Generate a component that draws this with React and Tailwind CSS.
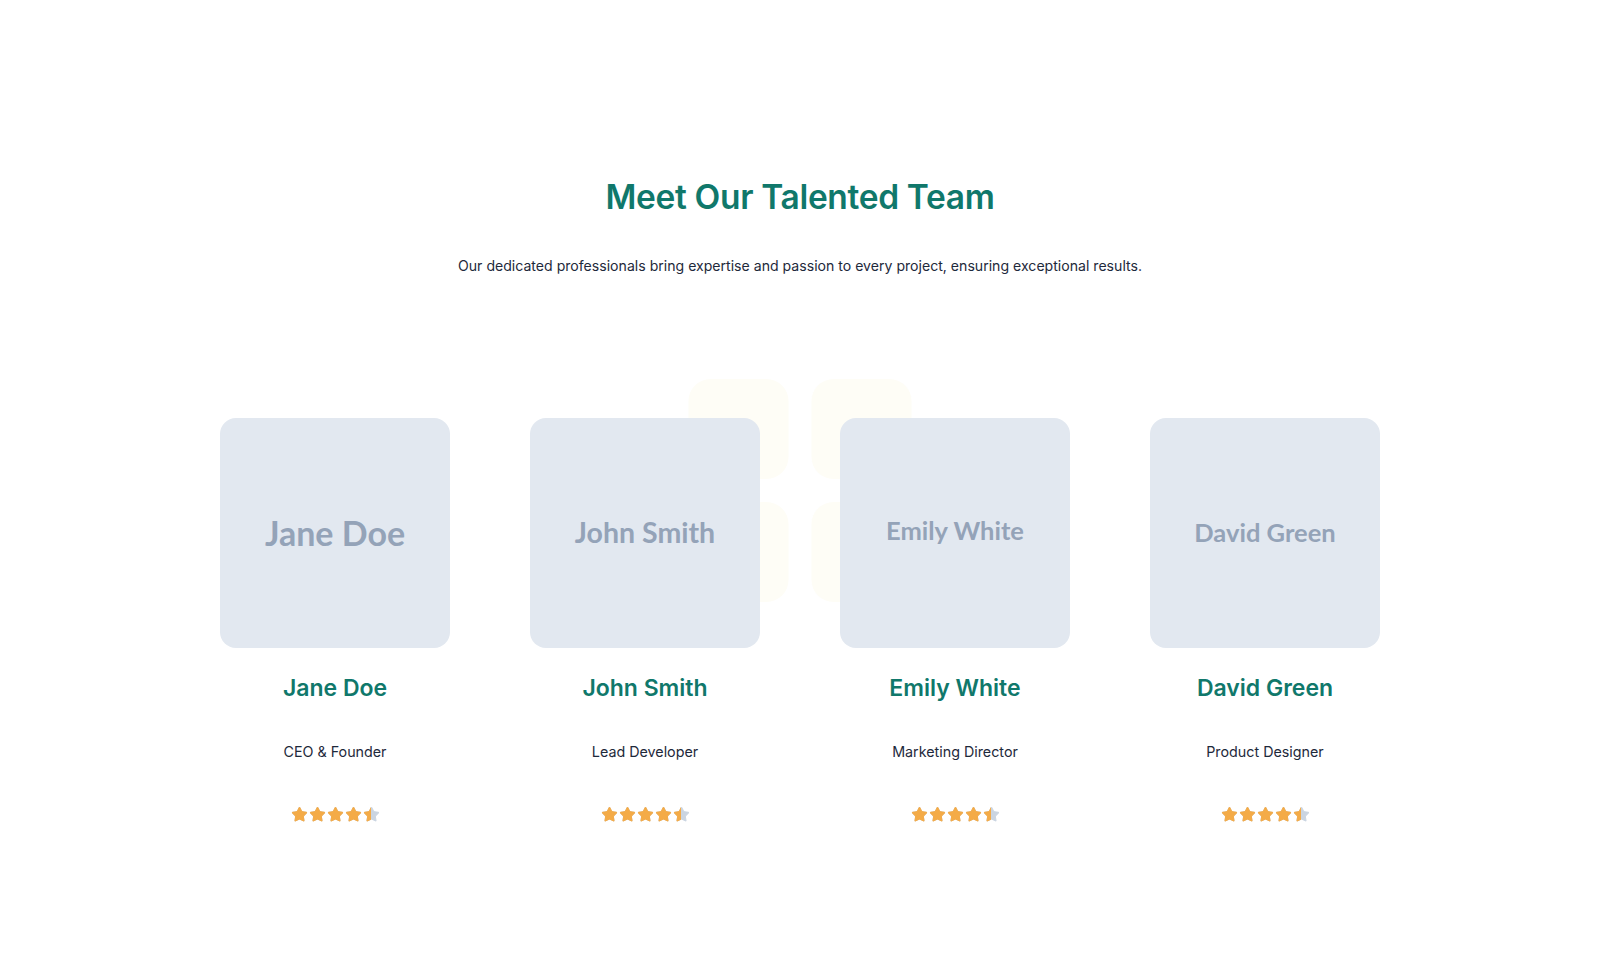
import { Star } from "lucide-react";

const team = [
    { name: "Jane Doe", role: "CEO & Founder", size: "text-[34px] -translate-y-[1px]", rating: 4.5 },
    { name: "John Smith", role: "Lead Developer", size: "text-[28.5px] -translate-y-[1px]", rating: 4.5 },
    { name: "Emily White", role: "Marketing Director", size: "text-[25.5px] -translate-y-[3px]", rating: 4.5 },
    { name: "David Green", role: "Product Designer", size: "text-[25.5px] -translate-y-[1px]", rating: 4.5 },
];

function Stars({ rating }) {
    return (
        <div className="flex items-center justify-center gap-[1px]">
            {[0, 1, 2, 3, 4].map((i) => {
                const fill = Math.max(0, Math.min(1, rating - i));
                return (
                    <div key={i} className="relative h-[17px] w-[17px]">
                        <Star className="absolute inset-0 h-[17px] w-[17px] fill-[#cbd5e1] text-[#cbd5e1]" strokeWidth={1.5} />
                        <div className="absolute inset-y-0 left-0 overflow-hidden" style={{ width: `${fill * 100}%` }}>
                            <Star className="h-[17px] w-[17px] fill-[#f4ab47] text-[#f4ab47]" strokeWidth={1.5} />
                        </div>
                    </div>
                );
            })}
        </div>
    );
}

function MemberCard({ member }) {
    return (
        <div className="flex w-[230px] flex-col items-center">
            <div className="flex h-[230px] w-[230px] items-center justify-center rounded-2xl bg-[#e2e8f0]">
                <span className={`font-['Lato',sans-serif] font-bold text-[#94a3b8] ${member.size}`}>{member.name}</span>
            </div>
            <h3 className="mt-[25px] text-[23px] font-semibold leading-[30px] text-[#10786b]">{member.name}</h3>
            <p className="mt-[39px] text-[14.3px] leading-[20px] text-[#1e293b]">{member.role}</p>
            <div className="mt-[44px]">
                <Stars rating={member.rating} />
            </div>
        </div>
    );
}

export default function App() {
    return (
        <main className="min-h-screen bg-white font-['Inter',sans-serif]">
            <section className="flex flex-col items-center pt-[171px] pb-[150px]">
                <h2 className="text-[33.5px] font-semibold leading-[52px] tracking-[-0.01em] text-[#10786b]">
                    Meet Our Talented Team
                </h2>
                <p className="mt-[31px] text-[14.1px] leading-[24px] text-[#1e293b]">
                    Our dedicated professionals bring expertise and passion to every project, ensuring exceptional results.
                </p>

                <div className="relative mt-[140px]">
                    {/* soft decoration behind the middle cards */}
                    <div className="absolute left-1/2 top-[-39px] grid -translate-x-1/2 grid-cols-2 gap-[23px]">
                        <div className="h-[100px] w-[100px] rounded-[22px] bg-[#fefdf6]" />
                        <div className="h-[100px] w-[100px] rounded-[22px] bg-[#fefdf6]" />
                        <div className="h-[100px] w-[100px] rounded-[22px] bg-[#fefdf6]" />
                        <div className="h-[100px] w-[100px] rounded-[22px] bg-[#fefdf6]" />
                    </div>
                    <div className="relative flex gap-[80px]">
                        {team.map((m) => (
                            <MemberCard key={m.name} member={m} />
                        ))}
                    </div>
                </div>
            </section>
        </main>
    );
}
